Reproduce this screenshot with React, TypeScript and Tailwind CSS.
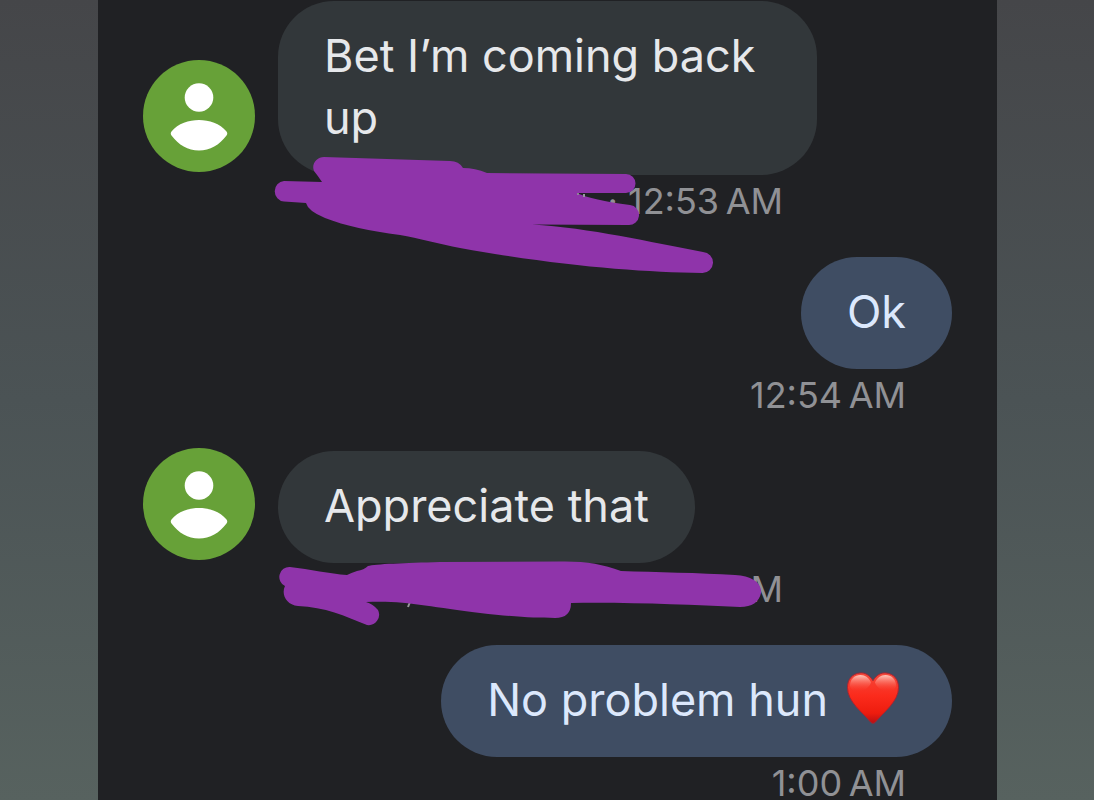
import type { ReactNode } from "react";
import clsx from "clsx";

function Avatar() {
  return (
    <svg
      viewBox="0 0 112 112"
      role="img"
      aria-label="Contact"
      className="-mt-[3px] mb-[3px] size-28 shrink-0"
    >
      <circle cx="56" cy="56" r="56" fill="#67a138" />
      <circle cx="56" cy="37.5" r="14.3" fill="#fff" />
      <path
        d="M28.5 71.5C35 63.500 46 60 56 60s21 3.500 27.500 11.500c1 1.300 1 2.700 0 4C76.500 85 67 90.500 56 90.500S35.500 85 28.500 75.500c-1-1.300-1-2.700 0-4z"
        fill="#fff"
      />
    </svg>
  );
}

function Heart() {
  return (
    <svg
      viewBox="0 0 54 56"
      role="img"
      aria-label="Red heart"
      className="mr-[7px] mb-1 h-[54px] w-[52px] shrink-0"
    >
      <defs>
        <linearGradient id="heartBody" x1="0" y1="0" x2="0" y2="1">
          <stop offset="0" stopColor="#f4493c" />
          <stop offset="0.45" stopColor="#fb2b1c" />
          <stop offset="0.8" stopColor="#ee1c0e" />
          <stop offset="1" stopColor="#b80f12" />
        </linearGradient>
        <linearGradient id="heartShine" x1="0" y1="0" x2="0" y2="1">
          <stop offset="0" stopColor="#ffc9bd" />
          <stop offset="1" stopColor="#fb3b2c" stopOpacity="0" />
        </linearGradient>
      </defs>
      <path
        d="M27 10C23.500 4 18.500 1.500 13.500 2 5.500 2.700.500 8.500.500 17c0 15 15.500 25.500 23.500 35.500 2 2.300 4 2.300 6 0C38 42.500 53.500 32 53.500 17c0-8.500-5-14.300-13-15C35.500 1.500 30.500 4 27 10z"
        fill="url(#heartBody)"
        stroke="#a82331"
        strokeWidth="1"
      />
      <path
        d="M3 15C3.500 8 8 4 14 4c5 0 9 3 11 8-2 5-6 8-11 9C8 22 4 20 3 15z"
        fill="url(#heartShine)"
      />
      <path
        d="M51 15C50.500 8 46 4 40 4c-5 0-9 3-11 8 2 5 6 8 11 9 6 1 10-1 11-6z"
        fill="url(#heartShine)"
      />
    </svg>
  );
}

// Marker strokes that hide the sender and date of the first message
function FirstScribble() {
  return (
    <svg
      viewBox="143 1 600 280"
      aria-hidden="true"
      className="absolute top-0 left-0 h-[280px] w-[600px]"
    >
      <path
        d="M324 157L450 161Q459 161 463 168Q475 168 487 173L626 174A9.500 9.500 0 0 1 626 193L577 193Q592 200 630 205A10 10 0 0 1 628 225L532 224.500C590 228 650 242 703 252A10.500 10.500 0 0 1 702 273C640 272 560 266 460 248C440 244 418 238 400 235C370 231 345 226 325 218Q308 211 306 203L284 201.500A10.300 10.300 0 0 1 284 181L322 182Q318 176 314 171C311 164 317 157 324 157Z"
        fill="#8f34aa"
      />
      <circle cx="578" cy="194" r="1" fill="#97989c" />
      <path d="M584 194v3" stroke="#97989c" strokeWidth="2" />
    </svg>
  );
}

function SecondScribble() {
  return (
    <svg
      viewBox="143 451 640 180"
      aria-hidden="true"
      className="absolute top-0 left-0 h-[180px] w-[640px]"
    >
      <path d="M410 602l-2 5" stroke="#97989c" strokeWidth="2" />
      <path
        d="M290 567A10 10 0 0 0 285 586C281 594 286 605 298 606C325 607 345 616 367 625A10.500 10.500 0 0 0 378 610Q373 604 366 602C405 600 430 607 480 613C515 617 535 618 555 618Q571 618 571 603C630 602 690 605 740 607C752 607 759 602 761 593C762 582 751 576 735 575C700 573 655 572 621 571C602 564 585 561 560 561.500L440 562C405 563 375 564 368 566Q364 570 357 571Q351 573 347 575C330 574 310 569 290 567Z"
        fill="#8f34aa"
      />
    </svg>
  );
}

type MessageProps = {
  children: ReactNode;
  time: string;
  sent?: boolean;
  scribble?: ReactNode;
};

function Message({ children, time, sent, scribble }: MessageProps) {
  return (
    <li className="relative mb-[38px] last:mb-0">
      <div className={clsx("flex items-end", sent && "justify-end")}>
        {!sent && <Avatar />}
        <div className={clsx("flex", sent ? "justify-end" : "ml-[23px] flex-1")}>
          <div
            className={clsx(
              "flex items-center rounded-[56px] px-[46px] pt-6 pb-[26px] text-[45px] leading-[62px]",
              sent
                ? "bg-[#3f4d63] text-[#dce8fc]"
                : "max-w-[80%] bg-[#32373a] text-[#e6e8eb]"
            )}
          >
            {children}
          </div>
        </div>
      </div>
      <div
        className={clsx(
          "mt-2 text-right text-[36px] leading-9 text-[#909195]",
          sent ? "pr-[46px]" : "pr-[169px]"
        )}
      >
        <time>{time}</time>
      </div>
      {scribble}
    </li>
  );
}

export default function App() {
  return (
    <div className="flex min-h-screen bg-linear-to-b from-[#454649] via-[#4b5355] to-[#57625f] pr-[97px] pl-[98px] font-['Inter','Liberation_Sans',sans-serif]">
      <main className="flex-1 bg-[#202124] px-[45px] pt-px">
        <ul>
          <Message time={"· 12:53\u202fAM"} scribble={<FirstScribble />}>
            Bet I’m coming back up
          </Message>
          <Message time={"12:54\u202fAM"} sent>
            Ok
          </Message>
          <Message time="AM" scribble={<SecondScribble />}>
            Appreciate that
          </Message>
          <Message time={"1:00\u202fAM"} sent>
            <span className="mr-[19px]">No problem hun</span>
            <Heart />
          </Message>
        </ul>
      </main>
    </div>
  );
}
